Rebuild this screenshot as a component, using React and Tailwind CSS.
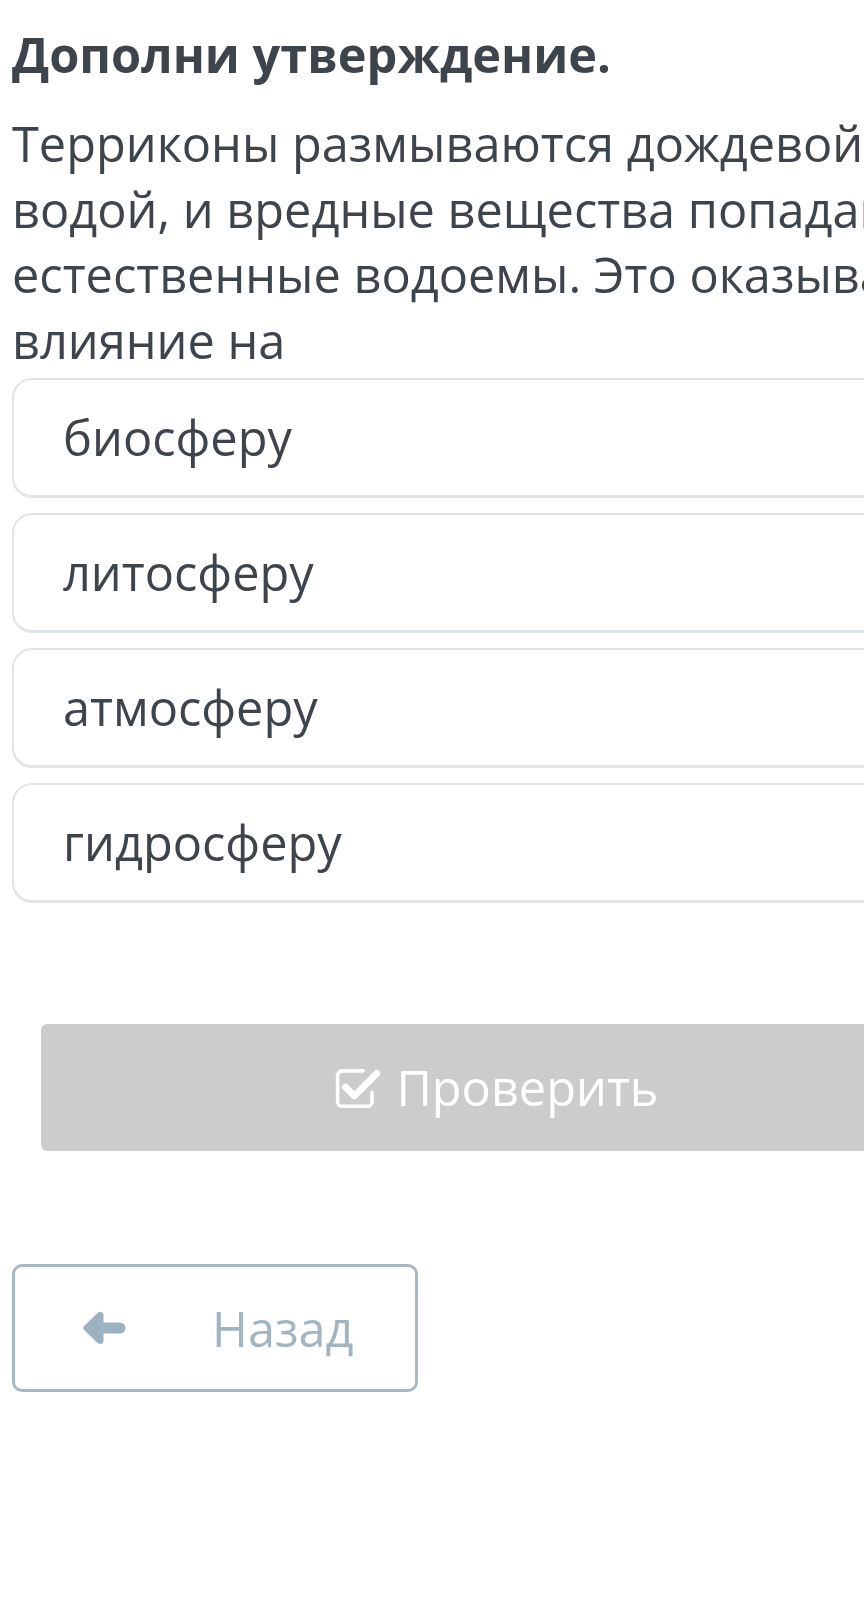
import React from "react";

const options = ["биосферу", "литосферу", "атмосферу", "гидросферу"];

function CheckSquareIcon() {
    return (
        <svg width="46" height="42" viewBox="0 0 44 40" fill="none" className="shrink-0">
            <path
                d="M27 4.5H7a4.5 4.5 0 0 0-4.5 4.5v25a4.5 4.5 0 0 0 4.5 4.5h24a4.5 4.5 0 0 0 4.5-4.5V25"
                stroke="white"
                strokeWidth="3.5"
                strokeLinecap="round"
            />
            <path d="M10 20l8.5 8.5L40 7" stroke="white" strokeWidth="6.5" strokeLinecap="round" strokeLinejoin="round" />
        </svg>
    );
}

function ArrowLeftIcon() {
    return (
        <svg width="44" height="36" viewBox="0 0 44 36" fill="none">
            <path d="M5 18L18 5.5V30.5Z" fill="#9db2c1" stroke="#9db2c1" strokeWidth="7" strokeLinejoin="round" />
            <path d="M14 18H38" stroke="#9db2c1" strokeWidth="11" strokeLinecap="round" />
        </svg>
    );
}

export default function App() {
    return (
        <div className="w-full min-h-[1604px] overflow-hidden bg-white" style={{ fontFamily: '"Open Sans", "Noto Sans", sans-serif' }}>
            <div className="w-[994px] px-[12px] pt-[28px] text-[#3e444b]">
                <h1 className="text-[48.7px] leading-[53px] font-bold">Дополни утверждение.</h1>
                <p className="mt-[30px] w-[1000px] text-[48.7px] leading-[65.7px]">
                    Терриконы размываются дождевой водой, и вредные вещества попадают в естественные водоемы. Это оказывает
                    влияние на
                </p>

                <div className="mt-[4px] flex flex-col gap-[15px]">
                    {options.map((o) => (
                        <div
                            key={o}
                            className="h-[120px] flex items-center rounded-[20px] border-2 border-[#e1e5e7] border-b-[3px] pl-[49px]"
                        >
                            <span className="text-[48.7px] leading-[66px]">{o}</span>
                        </div>
                    ))}
                </div>

                <div className="mt-[121px] mx-[29px] h-[127px] rounded-[6px] bg-[#cccccc] flex items-center justify-center gap-[15px]">
                    <CheckSquareIcon />
                    <span className="text-[48.7px] leading-[66px] text-white">Проверить</span>
                </div>

                <div className="mt-[113px] w-[406px] h-[128px] rounded-[10px] border-[3px] border-[#a9b9c4] flex items-center">
                    <div className="ml-[67px]">
                        <ArrowLeftIcon />
                    </div>
                    <span className="ml-[86px] text-[48.7px] leading-[66px] text-[#a3b5c1]">Назад</span>
                </div>
            </div>
        </div>
    );
}
